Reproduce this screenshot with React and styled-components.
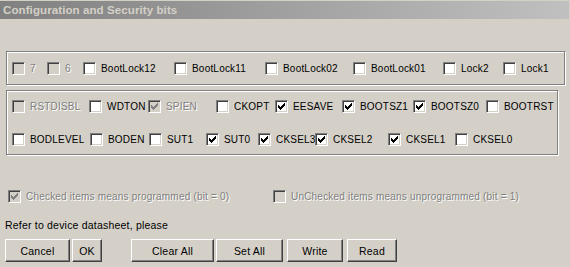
import React from "react";
import styled, { createGlobalStyle } from "styled-components";

const Global = createGlobalStyle`
  html, body { margin: 0; padding: 0; background: #d4d0c8; }
  body { font-family: "Liberation Sans", Arial, sans-serif; font-size: 10px; letter-spacing: 0.2px; }
`;

const Window = styled.div`
  width: 570px;
  height: 267px;
  background: #d4d0c8;
  display: flex;
  flex-direction: column;
  overflow: hidden;
`;

const TitleBar = styled.div`
  height: 18px;
  margin: 1px 1px 0 0;
  background: linear-gradient(to right, #808080 0%, #9a9a9a 40%, #c0c0c0 100%);
  color: #d4d0c8;
  font-weight: bold;
  font-size: 11.5px;
  display: flex;
  align-items: center;
  padding-left: 3px;
  letter-spacing: 0.1px;
`;

const Body = styled.div`
  display: flex;
  flex-direction: column;
  padding-left: 6px;
`;

const Group = styled.div`
  box-sizing: border-box;
  width: ${(p) => p.$w}px;
  margin-top: ${(p) => p.$mt}px;
  border: 1px solid #808080;
  border-right-color: #fff;
  border-bottom-color: #fff;
  box-shadow: inset 1px 1px #fff;
  position: relative;
  padding: ${(p) => p.$pad};
  display: flex;
  flex-direction: column;
  gap: 20px;
  &::after {
    content: "";
    position: absolute;
    inset: 0 0 0 0;
    border-right: 1px solid #808080;
    border-bottom: 1px solid #808080;
    pointer-events: none;
  }
`;

const Row = styled.div`
  display: flex;
  align-items: center;
  height: 13px;
`;

const Item = styled.div`
  display: flex;
  align-items: center;
  gap: 5px;
  width: ${(p) => (p.$w ? `${p.$w}px` : "auto")};
  flex: none;
`;

const Box = styled.span`
  box-sizing: border-box;
  width: 13px;
  height: 13px;
  flex: none;
  border-top: 1px solid #808080;
  border-left: 1px solid #808080;
  border-right: 1px solid #fff;
  border-bottom: 1px solid #fff;
  box-shadow: inset 1px 1px #404040, inset -1px -1px #d4d0c8;
  background: ${(p) => (p.$disabled ? "#d4d0c8" : "#fff")};
  position: relative;
  svg {
    position: absolute;
    left: 2px;
    top: 2px;
  }
`;

const Label = styled.span`
  line-height: 13px;
  white-space: nowrap;
  color: ${(p) => (p.$disabled ? "#808080" : "#000")};
  text-shadow: ${(p) => (p.$disabled ? "1px 1px #ffffff" : "none")};
`;

const Check = ({ color }) => (
  <svg width="7" height="7" viewBox="0 0 7 7" shapeRendering="crispEdges">
    <path
      fill={color}
      d="M6 0h1v1h-1zM5 1h2v1h-2zM0 2h1v1h-1zM4 2h3v1h-3zM0 3h2v1h-2zM3 3h3v1h-3zM0 4h5v1h-5zM1 5h3v1h-3zM2 6h1v1h-1z"
    />
  </svg>
);

const CheckItem = ({ label, checked, disabled, w }) => (
  <Item $w={w}>
    <Box $disabled={disabled}>{checked && <Check color={disabled ? "#808080" : "#000"} />}</Box>
    <Label $disabled={disabled}>{label}</Label>
  </Item>
);

const LegendRow = styled.div`
  display: flex;
  align-items: center;
  height: 13px;
  margin-top: 34px;
  padding-left: 2px;
`;

const Note = styled.div`
  margin-top: 16px;
  line-height: 13px;
  margin-left: -1px;
  font-size: 10.5px;
`;

const Buttons = styled.div`
  display: flex;
  margin-top: 7px;
  margin-left: -1px;
`;

const Button = styled.div`
  box-sizing: border-box;
  width: ${(p) => p.$w}px;
  height: 23px;
  margin-left: ${(p) => p.$ml || 0}px;
  display: flex;
  align-items: center;
  justify-content: center;
  background: #d4d0c8;
  color: #000;
  border-top: 1px solid #fff;
  border-left: 1px solid #fff;
  border-right: 1px solid #404040;
  border-bottom: 1px solid #404040;
  box-shadow: inset -1px -1px #808080;
  font-size: 10.5px;
`;

const row1 = [
  { label: "7", disabled: true, w: 35 },
  { label: "6", disabled: true, w: 36 },
  { label: "BootLock12", w: 91 },
  { label: "BootLock11", w: 91 },
  { label: "BootLock02", w: 88 },
  { label: "BootLock01", w: 90 },
  { label: "Lock2", w: 60 },
  { label: "Lock1" },
];

const row2 = [
  { label: "RSTDISBL", disabled: true, w: 77 },
  { label: "WDTON", w: 59 },
  { label: "SPIEN", disabled: true, checked: true, w: 68 },
  { label: "CKOPT", w: 59 },
  { label: "EESAVE", checked: true, w: 67 },
  { label: "BOOTSZ1", checked: true, w: 71 },
  { label: "BOOTSZ0", checked: true, w: 73 },
  { label: "BOOTRST" },
];

const row3 = [
  { label: "BODLEVEL", w: 78 },
  { label: "BODEN", w: 59 },
  { label: "SUT1", w: 57 },
  { label: "SUT0", checked: true, w: 52 },
  { label: "CKSEL3", checked: true, w: 57 },
  { label: "CKSEL2", checked: true, w: 73 },
  { label: "CKSEL1", checked: true, w: 67 },
  { label: "CKSEL0" },
];

const renderRow = (items) => (
  <Row>
    {items.map((it) => (
      <CheckItem key={it.label} {...it} />
    ))}
  </Row>
);

export default function App() {
  return (
    <>
      <Global />
      <Window>
        <TitleBar>Configuration and Security bits</TitleBar>
        <Body>
          <Group $w={560} $mt={32} $pad="10px 0 10px 5px">
            {renderRow(row1)}
          </Group>
          <Group $w={553} $mt={4} $pad="9px 0 9px 5px">
            {renderRow(row2)}
            {renderRow(row3)}
          </Group>
          <LegendRow>
            <CheckItem label="Checked items means programmed (bit = 0)" checked disabled w={265} />
            <CheckItem label="UnChecked items means unprogrammed (bit = 1)" disabled />
          </LegendRow>
          <Note>Refer to device datasheet, please</Note>
          <Buttons>
            <Button $w={65}>Cancel</Button>
            <Button $w={30} $ml={2}>OK</Button>
            <Button $w={83} $ml={29}>Clear All</Button>
            <Button $w={67} $ml={2}>Set All</Button>
            <Button $w={56} $ml={4}>Write</Button>
            <Button $w={50} $ml={4}>Read</Button>
          </Buttons>
        </Body>
      </Window>
    </>
  );
}
